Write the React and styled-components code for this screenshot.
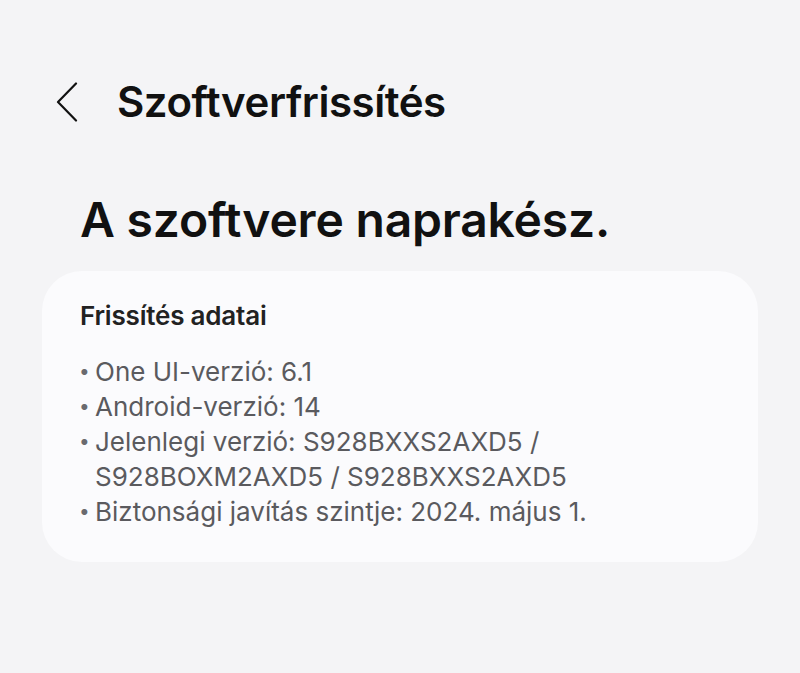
import React from 'react';
import styled, { createGlobalStyle } from 'styled-components';

const GlobalStyle = createGlobalStyle`
  html, body {
    margin: 0;
    padding: 0;
    background: #f4f4f6;
  }
  body {
    font-family: "Inter", "Roboto", sans-serif;
    -webkit-font-smoothing: antialiased;
  }
`;

const Page = styled.div`
  width: 800px;
  height: 673px;
  background: #f4f4f6;
  padding: 81px 42px 0 42px;
  box-sizing: border-box;
`;

const Header = styled.div`
  display: flex;
  align-items: center;
  gap: 38px;
  height: 42px;
  padding-left: 13px;
`;

const BackButton = styled.button`
  display: flex;
  align-items: center;
  justify-content: center;
  width: 24px;
  height: 42px;
  padding: 0;
  border: none;
  background: transparent;
  cursor: pointer;
`;

const Title = styled.h1`
  margin: 0;
  font-size: 42px;
  line-height: 42px;
  font-weight: 600;
  color: #111;
  letter-spacing: -0.45px;
`;

const Status = styled.h2`
  margin: 69px 0 0 38px;
  font-size: 48px;
  font-weight: 600;
  color: #111;
  line-height: 56px;
  letter-spacing: -0.2px;
`;

const Card = styled.section`
  margin-top: 23px;
  background: #fbfbfd;
  border-radius: 40px;
  padding: 30px 38px 33px 38px;
`;

const CardTitle = styled.h3`
  margin: 0 0 23px 0;
  font-size: 26px;
  font-weight: 600;
  color: #222;
  line-height: 30px;
  letter-spacing: -0.2px;
`;

const List = styled.ul`
  margin: 0;
  padding: 0;
  list-style: none;
`;

const Item = styled.li`
  position: relative;
  padding-left: 15px;
  font-size: 26px;
  line-height: 35px;
  color: #5a5a5e;

  &::before {
    content: "•";
    position: absolute;
    left: -1px;
    top: 0;
    font-size: 19px;
    color: #6a6a6e;
  }
`;

const ChevronLeft = () => (
  <svg width="22" height="40" viewBox="0 0 22 40" fill="none">
    <path d="M20 1.5 L2 20 L20 38.5" stroke="#111" strokeWidth="2.2" strokeLinecap="round" strokeLinejoin="round" />
  </svg>
);

const items = [
  ['One UI-verzió: 6.1'],
  ['Android-verzió: 14'],
  ['Jelenlegi verzió: S928BXXS2AXD5 /', 'S928BOXM2AXD5 / S928BXXS2AXD5'],
  ['Biztonsági javítás szintje: 2024. május 1.'],
];

export default function App() {
  return (
    <>
      <GlobalStyle />
      <Page>
        <Header>
          <BackButton aria-label="Vissza">
            <ChevronLeft />
          </BackButton>
          <Title>Szoftverfrissítés</Title>
        </Header>
        <Status>A szoftvere naprakész.</Status>
        <Card>
          <CardTitle>Frissítés adatai</CardTitle>
          <List>
            {items.map((lines, i) => (
              <Item key={i}>
                {lines.map((l, j) => (
                  <React.Fragment key={j}>
                    {j > 0 && <br />}
                    {l}
                  </React.Fragment>
                ))}
              </Item>
            ))}
          </List>
        </Card>
      </Page>
    </>
  );
}
